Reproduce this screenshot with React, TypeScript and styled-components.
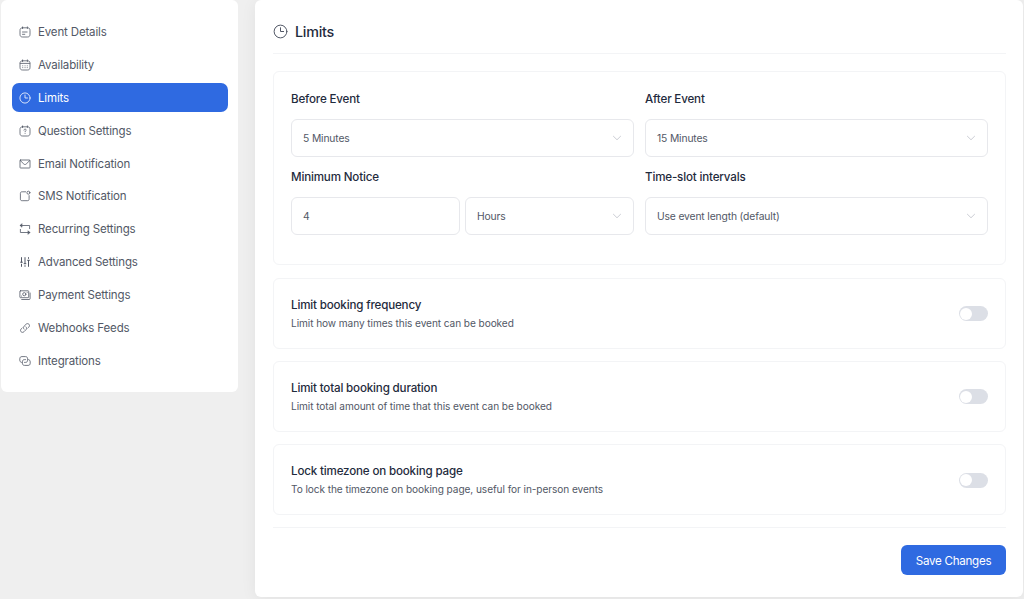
import React, { useState } from 'react';
import styled, { createGlobalStyle } from 'styled-components';

const GlobalStyle = createGlobalStyle`
  * { box-sizing: border-box; }
  html, body { margin: 0; height: 100%; overflow: hidden; background: #efefef; }
  body, button, input { font-family: Inter, "Liberation Sans", sans-serif; }
`;

const Page = styled.div`
  display: flex;
  align-items: flex-start;
  gap: 17px;
  height: 599px;
  padding: 0 1px;
`;

const Sidebar = styled.nav`
  display: flex;
  flex-direction: column;
  gap: 4px;
  width: 237px;
  height: 392px;
  padding: 17.3px 10px 0 11px;
  background: #fff;
  border-radius: 6px;
`;

const NavItem = styled.button<{ $active: boolean }>`
  display: flex;
  align-items: center;
  gap: 7px;
  width: 100%;
  height: 28.85px;
  flex: none;
  padding: 1px 7px 0;
  border: 0;
  border-radius: 7px;
  background: ${(p) => (p.$active ? '#2f6ae1' : 'transparent')};
  color: ${(p) => (p.$active ? '#fff' : '#525866')};
  font-size: 11.5px;
  letter-spacing: -0.15px;
  text-align: left;
  white-space: nowrap;
  cursor: pointer;
`;

const Icon = styled.svg<{ $size?: number }>`
  width: ${(p) => p.$size ?? 12}px;
  height: ${(p) => p.$size ?? 12}px;
  flex: none;
  fill: none;
  stroke: currentColor;
  stroke-width: 0.8;
  stroke-linecap: round;
  stroke-linejoin: round;
`;

const Main = styled.main`
  flex: 1;
  height: 597px;
  padding: 0 17px 0 18px;
  background: #fff;
  border-radius: 6px;
  box-shadow: 0 2px 16px rgba(0, 0, 0, 0.06);
`;

const Header = styled.header`
  display: flex;
  align-items: center;
  gap: 7px;
  height: 54px;
  padding-top: 10px;
  border-bottom: 1px solid #f3f4f6;
  color: #525866;
`;

const Title = styled.h1`
  margin: 0;
  color: #1f2b3d;
  font-size: 14.3px;
  font-weight: 550;
  letter-spacing: -0.25px;
  line-height: 20px;
`;

const Card = styled.section`
  border: 1px solid #f3f4f6;
  border-radius: 6px;
`;

const FieldsCard = styled(Card)`
  display: grid;
  grid-template-columns: 1fr 1fr;
  column-gap: 11px;
  align-content: start;
  height: 194px;
  margin-top: 17.4px;
  padding: 15.6px 17px 0;
`;

const Field = styled.div`
  height: 78.4px;
`;

const Label = styled.div`
  height: 31px;
  color: #1f2b3d;
  font-size: 11.6px;
  font-weight: 550;
  letter-spacing: -0.17px;
  line-height: 23px;
`;

const Split = styled.div`
  display: grid;
  grid-template-columns: 1fr 1fr;
  gap: 5px;
`;

const Control = styled.div`
  display: flex;
  align-items: center;
  justify-content: space-between;
  height: 38px;
  padding: 0 11px;
  border: 1px solid #e7e8ec;
  border-radius: 6px;
  background: #fff;
  color: #525866;
  font-size: 10.3px;
  letter-spacing: -0.14px;
`;

const Chevron = styled(Icon)`
  color: #b0b4be;
`;

const ToggleCard = styled(Card)`
  display: flex;
  align-items: center;
  justify-content: space-between;
  height: 71px;
  margin-top: 12.3px;
  padding: 1px 17px 0;
`;

const ToggleTitle = styled.div`
  color: #1f2b3d;
  font-size: 11.6px;
  font-weight: 550;
  letter-spacing: -0.17px;
  line-height: 19px;
`;

const ToggleText = styled.div`
  color: #525866;
  font-size: 10.1px;
  letter-spacing: -0.07px;
  line-height: 17px;
`;

const Switch = styled.button<{ $on: boolean }>`
  display: flex;
  align-items: center;
  justify-content: ${(p) => (p.$on ? 'flex-end' : 'flex-start')};
  width: 29.5px;
  height: 15px;
  padding: 1px;
  border: 0;
  border-radius: 8px;
  background: ${(p) => (p.$on ? '#2f6ae1' : '#dcdfe6')};
  cursor: pointer;
`;

const Knob = styled.span`
  width: 12px;
  height: 12px;
  border-radius: 50%;
  background: #fff;
`;

const Footer = styled.footer`
  display: flex;
  justify-content: flex-end;
  margin-top: 12px;
  padding-top: 17.2px;
  border-top: 1px solid #f3f4f6;
`;

const SaveButton = styled.button`
  width: 105px;
  height: 29.5px;
  padding: 1px 0 0;
  border: 0;
  border-radius: 6px;
  background: #2f6ae1;
  color: #fff;
  font-size: 11.6px;
  letter-spacing: -0.27px;
  white-space: nowrap;
  cursor: pointer;
`;

const clock = (
  <>
    <circle cx="6" cy="6" r="5.1" />
    <path d="M6 3v3h2.5" />
  </>
);

const frame = <path d="M3.6 1.8h4.8c1.8 0 2.6.8 2.6 2.6v3.9c0 1.8-.8 2.7-2.6 2.7H3.6C1.8 11 1 10.1 1 8.3V4.4c0-1.8.8-2.6 2.6-2.6zM3.6.9v1.6M8.4.9v1.6" />;

const navigation: { label: string; icon: React.ReactNode }[] = [
  { label: 'Event Details', icon: <>{frame}<path d="M3.5 6h4.6M3.5 8.3h2.3" /></> },
  { label: 'Availability', icon: <>{frame}<path d="M1.2 4.4h9.6" /><path d="M3.7 6.8h.1M6 6.8h.1M8.2 6.8h.1M3.7 8.6h.1M6 8.6h.1M8.2 8.6h.1" /></> },
  { label: 'Limits', icon: clock },
  { label: 'Question Settings', icon: <>{frame}<path d="M4.9 5.1c0-1.4 2.3-1.3 2.3 0 0 .8-1.1.8-1.1 1.6M6.1 8.3v.1" /></> },
  { label: 'Email Notification', icon: <><rect x="1" y="2" width="10" height="8" rx=".6" /><path d="M1.3 2.6 4.8 6c.8.7 1.6.7 2.4 0l3.5-3.4" /></> },
  { label: 'SMS Notification', icon: <><path d="M6.6 1.8H3.2c-1.3 0-1.8.5-1.8 1.7v5.4c0 1.3.5 1.8 1.8 1.8h5.1c1.3 0 1.8-.5 1.8-1.8V5.6" /><circle cx="9.4" cy="2.7" r="1.5" /></> },
  { label: 'Recurring Settings', icon: <><path d="M2.6 1 1.2 2.5l1.4 1.4zM9.4 8.1l1.4 1.4L9.4 11z" fill="currentColor" /><path d="M1.4 2.5h9.2v3.1M10.6 9.5H1.4V6.4" /></> },
  { label: 'Advanced Settings', icon: <path strokeWidth="1" d="M2.5 1.6v4.6M2.5 8.2v2.2M6 1.6v6M6 9.6v.8M9.5 1.6v.8M9.5 4.5v5.9M1.6 6.2h1.8M5.1 7.7h1.8M8.6 4.3h1.8" /> },
  { label: 'Payment Settings', icon: <><rect x=".9" y="1.8" width="8.8" height="6.9" rx=".6" /><circle cx="5.3" cy="5.2" r="1.6" /><path d="M2.7 10.5h7.4c.7 0 1-.3 1-1V4M2.4 7.1h.1M8.1 3.4h.1" /></> },
  { label: 'Webhooks Feeds', icon: <><path d="M5 7.1c-.9-.9-.8-2 .1-2.9l1.9-1.9c.9-.9 2.1-.9 2.9-.1s.8 2-.1 2.9l-.9.9" /><path d="M7 4.9c.9.9.8 2-.1 2.9L5 9.7c-.9.9-2.1.9-2.9.1s-.8-2 .1-2.9l.9-.9" /></> },
  { label: 'Integrations', icon: <><path d="M2.4 7.4C1.3 7.1.8 6.4.8 5.2V3.8c0-1.5.8-2.2 2.2-2.2h3.4c1.4 0 2.2.7 2.2 2.2v1.4c0 1.5-.8 2.2-2.2 2.2h-.9" /><path d="M9.6 4.6c1.1.3 1.6 1 1.6 2.2v1.4c0 1.5-.8 2.2-2.2 2.2H5.6c-1.4 0-2.2-.7-2.2-2.2V6.8c0-1.5.8-2.2 2.2-2.2h.9" /></> },
];

const toggles = [
  { title: 'Limit booking frequency', text: 'Limit how many times this event can be booked' },
  { title: 'Limit total booking duration', text: 'Limit total amount of time that this event can be booked' },
  { title: 'Lock timezone on booking page', text: 'To lock the timezone on booking page, useful for in-person events' },
];

function Select({ value }: { value: string }) {
  return (
    <Control role="combobox">
      {value}
      <Chevron viewBox="0 0 12 12" $size={10}><path d="M1.7 3.9 6 8.1l4.3-4.2" /></Chevron>
    </Control>
  );
}

export default function App() {
  const [active, setActive] = useState('Limits');
  const [on, setOn] = useState([false, false, false]);

  return (
    <>
      <GlobalStyle />
      <Page>
        <Sidebar>
          {navigation.map(({ label, icon }) => (
            <NavItem key={label} $active={label === active} onClick={() => setActive(label)}>
              <Icon viewBox="0 0 12 12">{icon}</Icon>
              {label}
            </NavItem>
          ))}
        </Sidebar>
        <Main>
          <Header>
            <Icon viewBox="0 0 12 12" $size={15}>{clock}</Icon>
            <Title>Limits</Title>
          </Header>
          <FieldsCard>
            <Field>
              <Label>Before Event</Label>
              <Select value="5 Minutes" />
            </Field>
            <Field>
              <Label>After Event</Label>
              <Select value="15 Minutes" />
            </Field>
            <Field>
              <Label>Minimum Notice</Label>
              <Split>
                <Control>4</Control>
                <Select value="Hours" />
              </Split>
            </Field>
            <Field>
              <Label>Time-slot intervals</Label>
              <Select value="Use event length (default)" />
            </Field>
          </FieldsCard>
          {toggles.map(({ title, text }, i) => (
            <ToggleCard key={title}>
              <div>
                <ToggleTitle>{title}</ToggleTitle>
                <ToggleText>{text}</ToggleText>
              </div>
              <Switch
                $on={on[i]}
                aria-label={title}
                onClick={() => setOn(on.map((v, j) => (j === i ? !v : v)))}
              >
                <Knob />
              </Switch>
            </ToggleCard>
          ))}
          <Footer>
            <SaveButton>Save Changes</SaveButton>
          </Footer>
        </Main>
      </Page>
    </>
  );
}
